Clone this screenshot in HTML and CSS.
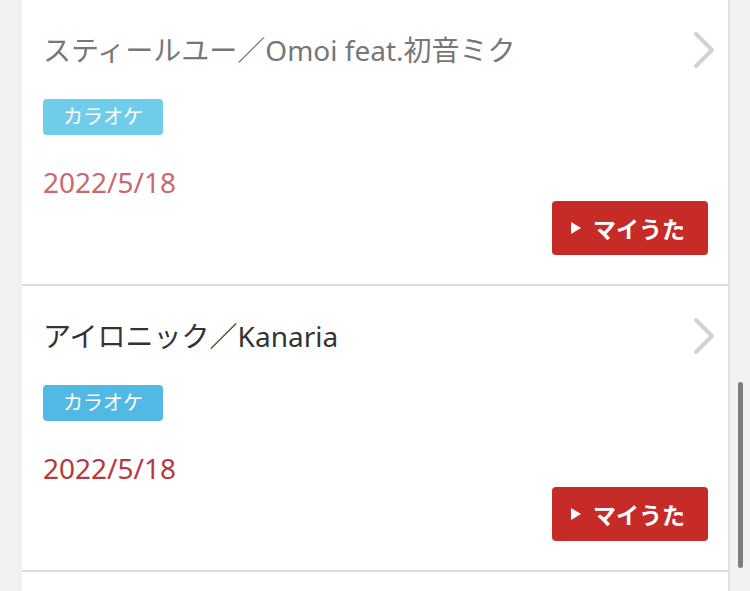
FILE: index.html
```html
<!DOCTYPE html>
<html lang="ja">
<head>
  <meta charset="UTF-8">
  <meta name="viewport" content="width=device-width, initial-scale=1.0">
  <title>マイうた履歴</title>
  <link rel="stylesheet" href="styles.css">
</head>
<body>
  <div class="page">
    <ul class="song-list">
      <li class="song faded">
        <div class="song-head">
          <p class="song-title">スティールユー／Omoi feat.初音ミク</p>
          <svg class="chevron" width="22" height="38" viewBox="0 0 22 38">
            <polyline points="3,3 19,19 3,35" fill="none" stroke="#d2d2d2" stroke-width="4" stroke-linecap="round" stroke-linejoin="round"/>
          </svg>
        </div>
        <span class="tag">カラオケ</span>
        <p class="date">2022/5/18</p>
        <div class="actions">
          <button class="myuta"><span class="play"></span>マイうた</button>
        </div>
      </li>
      <li class="song">
        <div class="song-head">
          <p class="song-title">アイロニック／Kanaria</p>
          <svg class="chevron" width="22" height="38" viewBox="0 0 22 38">
            <polyline points="3,3 19,19 3,35" fill="none" stroke="#d2d2d2" stroke-width="4" stroke-linecap="round" stroke-linejoin="round"/>
          </svg>
        </div>
        <span class="tag">カラオケ</span>
        <p class="date">2022/5/18</p>
        <div class="actions">
          <button class="myuta"><span class="play"></span>マイうた</button>
        </div>
      </li>
      <li class="song">
        <div class="song-head">
          <p class="song-title">&nbsp;</p>
        </div>
      </li>
    </ul>
  </div>
  <div class="scrollbar"></div>
</body>
</html>
```

FILE: styles.css
```css
html, body {
  margin: 0;
  height: 100%;
  overflow: hidden;
}
body {
  font-family: "Noto Sans", "Noto Sans CJK JP", sans-serif;
  background-color: #f2f2f2;
  color: #333;
}
.page {
  padding: 0 20px 0 22px;
}
.song-list {
  list-style: none;
  margin: 0;
  padding: 0;
  background-color: white;
  border-right: 2px solid #dedede;
}
.song {
  padding: 30px 20px 29px 21px;
  border-bottom: 2px solid #dcdcdc;
}
.song-head {
  display: flex;
  align-items: center;
  justify-content: space-between;
  height: 40px;
  margin-right: -7px;
}
.song-title {
  margin: 0;
  font-size: 28px;
  line-height: 40px;
  white-space: nowrap;
}
.tag {
  display: inline-block;
  margin-top: 29px;
  padding: 0 20px;
  height: 36px;
  line-height: 36px;
  font-size: 20px;
  color: white;
  background-color: #52b8e6;
  border-radius: 4px;
}
.date {
  margin: 32px 0 0;
  font-size: 28px;
  line-height: 30px;
  color: #b83840;
}
.actions {
  display: flex;
  justify-content: flex-end;
  margin-top: 4px;
}
.myuta {
  display: flex;
  align-items: center;
  justify-content: center;
  width: 156px;
  height: 54px;
  padding: 0 4px 0 0;
  border: none;
  border-radius: 4px;
  background-color: #c62b27;
  color: white;
  font-family: inherit;
  font-size: 23px;
  font-weight: bold;
  cursor: pointer;
}
.play {
  width: 0;
  height: 0;
  margin-right: 12px;
  border-top: 6px solid transparent;
  border-bottom: 6px solid transparent;
  border-left: 10px solid white;
}
.faded .song-title {
  color: #777;
}
.faded .tag {
  background-color: #6fcdea;
}
.faded .date {
  color: #c9696f;
}
.scrollbar {
  position: fixed;
  left: 738px;
  top: 382px;
  width: 5px;
  height: 186px;
  border-radius: 3px;
  background-color: #7d7d7d;
}
```
